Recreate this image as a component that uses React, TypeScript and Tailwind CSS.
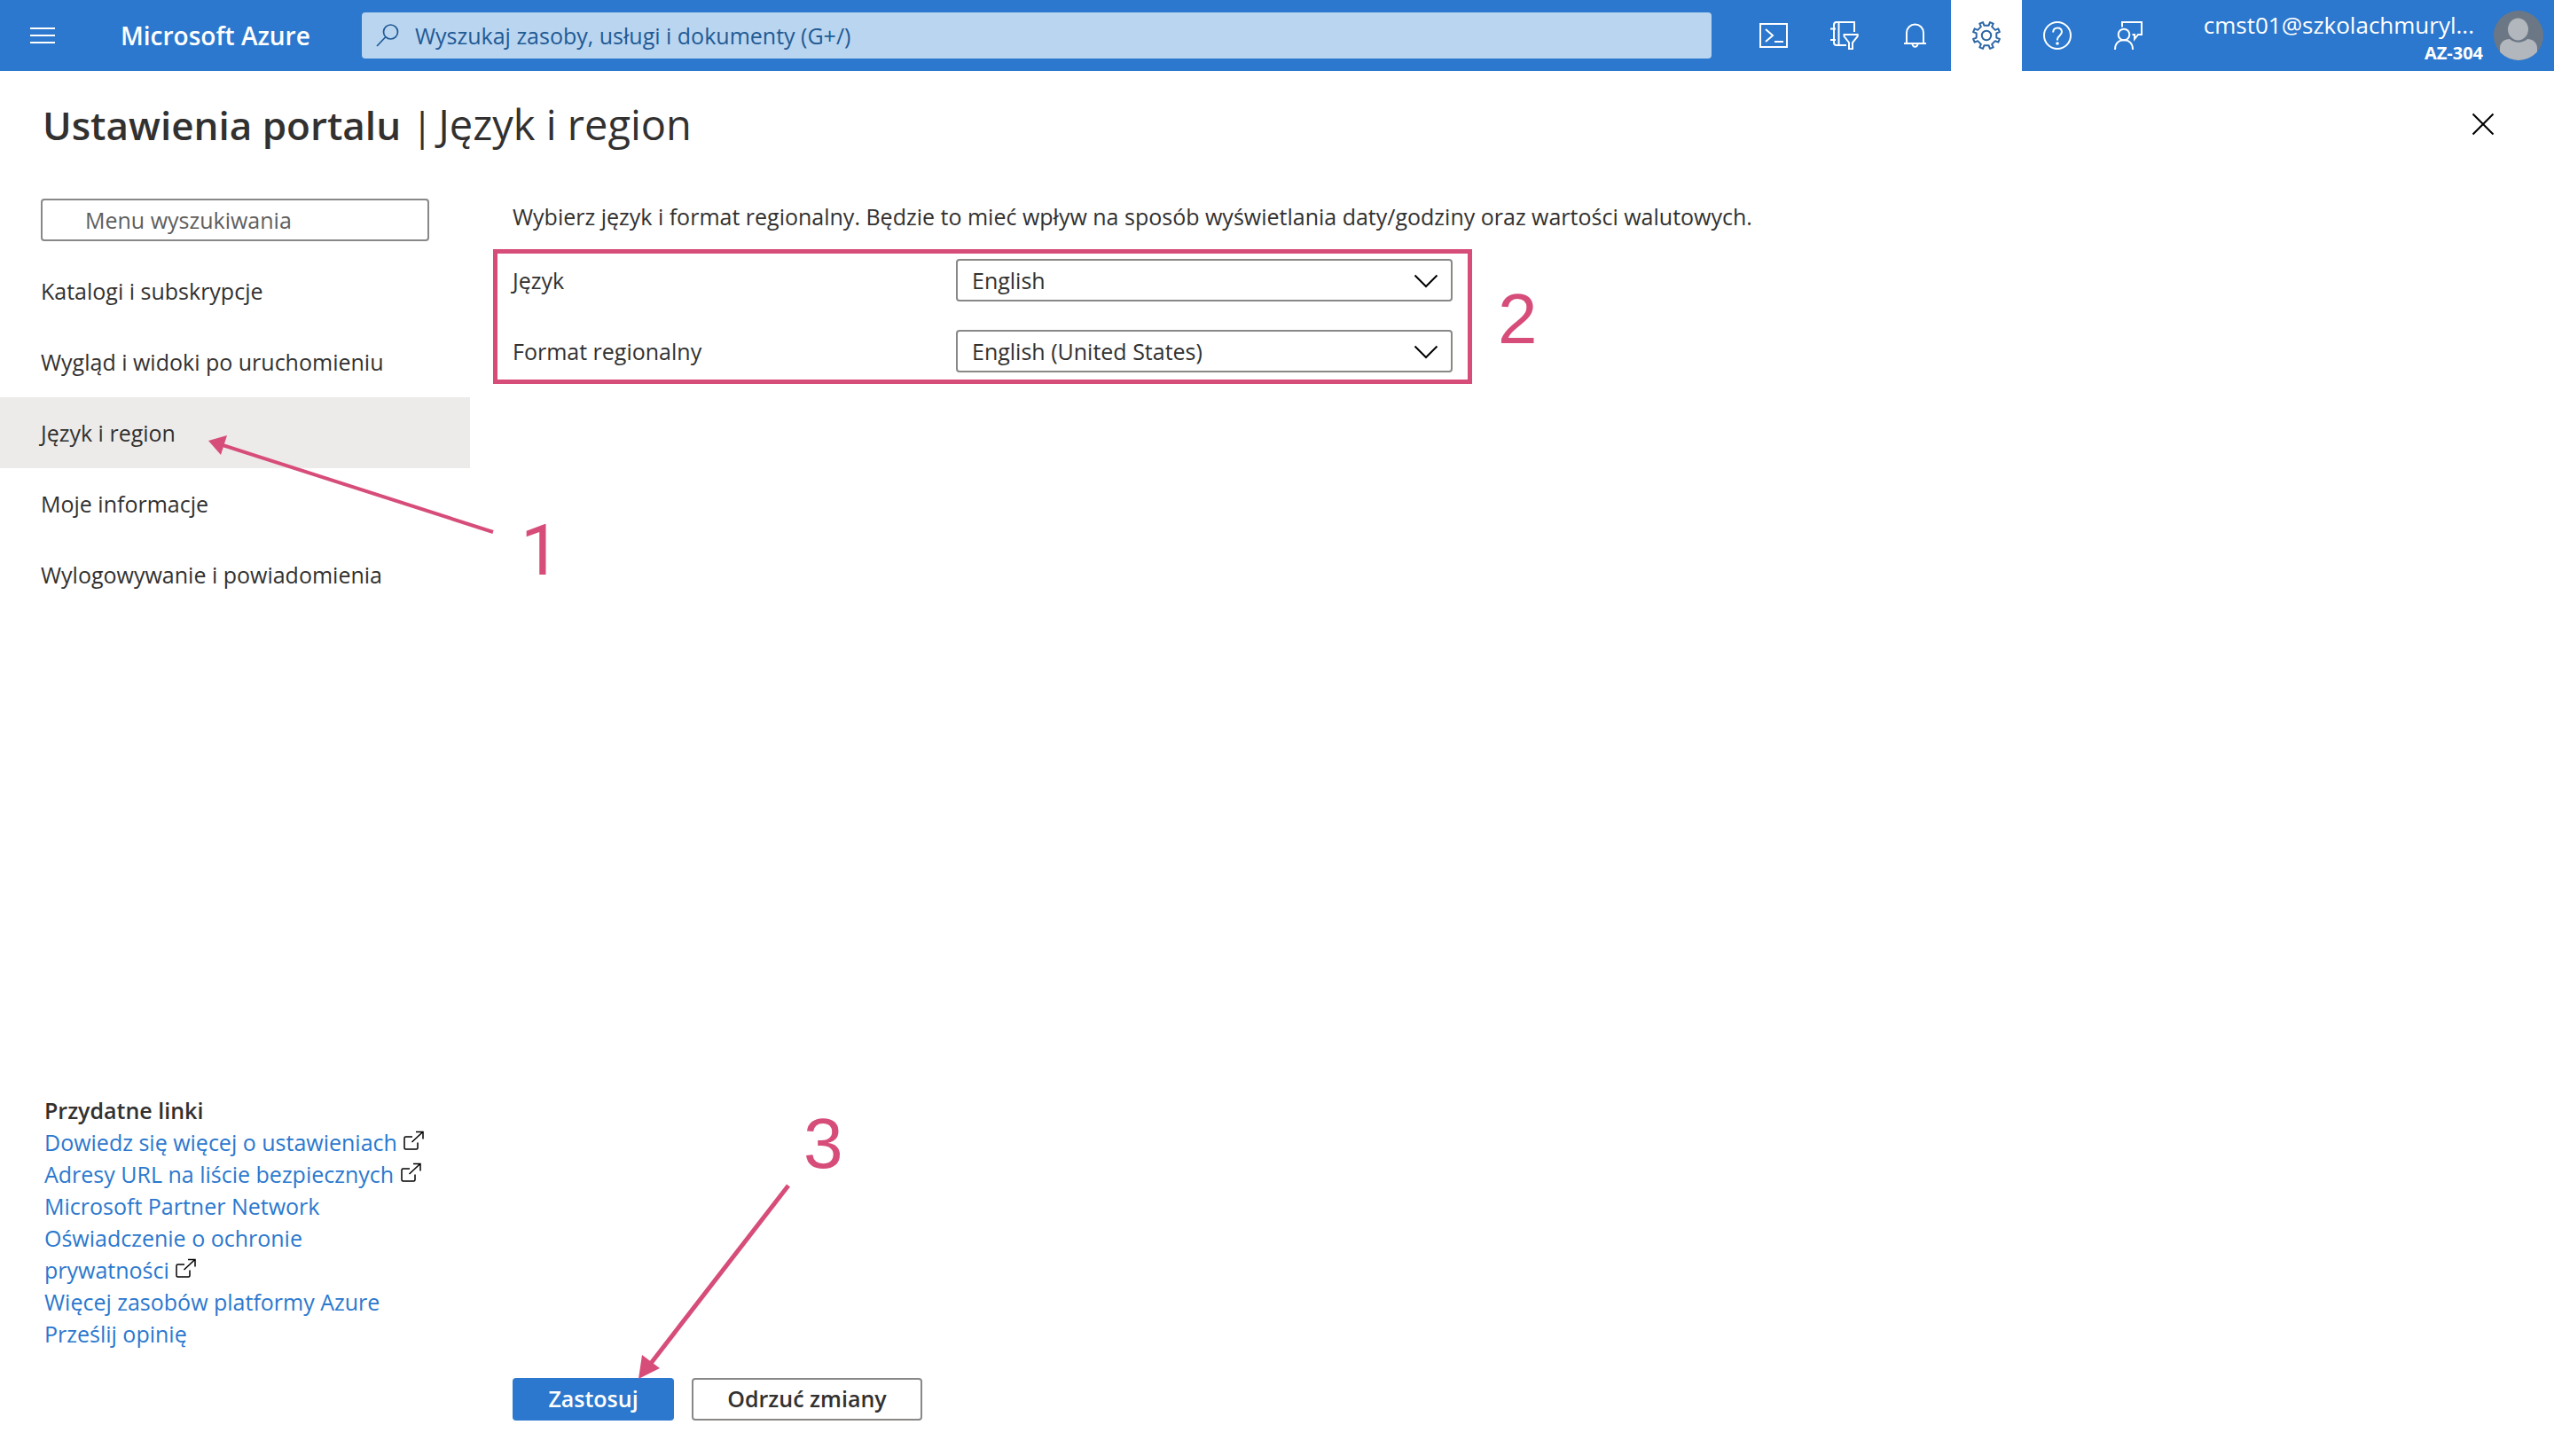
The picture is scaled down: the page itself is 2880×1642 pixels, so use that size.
import type { ReactNode } from 'react';

type Glyph = { children: ReactNode; className?: string; width?: number };

function Icon({ children, className = '', width = 2 }: Glyph) {
  return (
    <svg
      viewBox="0 0 32 32"
      className={'block size-8 ' + className}
      fill="none"
      stroke="currentColor"
      strokeWidth={width}
      aria-hidden="true"
    >
      {children}
    </svg>
  );
}

const polar = (radius: number, degrees: number) => {
  const a = ((degrees - 90) * Math.PI) / 180;
  return (16 + radius * Math.cos(a)).toFixed(2) + ' ' + (16 + radius * Math.sin(a)).toFixed(2);
};

// Outline of an eight-tooth gear, with a gap at twelve o'clock.
const gearPath =
  'M' +
  Array.from({ length: 8 }, (_, i) => {
    const gap = i * 45;
    return [polar(11.6, gap - 13), polar(11.6, gap + 13), polar(15.4, gap + 15), polar(15.4, gap + 30)].join('L');
  }).join('L') +
  'Z';

function CloudShellIcon() {
  return (
    <Icon>
      <path d="M1 3h30v26H1z" />
      <path d="M7 9l8 7-8 7M17 23h10" />
    </Icon>
  );
}

function DirectoryIcon() {
  return (
    <Icon>
      <path d="M27 12V1H7Q4 1 4 4v20q0 3 3 3h11M9.500 1v26M0 8.500h6M0 21h6" />
      <path d="M15.500 15h15.200v2l-5.700 7v7.200h-4V24l-5.500-7z" />
    </Icon>
  );
}

function BellIcon() {
  return (
    <Icon>
      <path d="M6 25V13a9.500 9.500 0 0 1 19 0v12M3 25h25M12.500 25.500a3 3.200 0 0 0 6 0" />
    </Icon>
  );
}

function GearIcon() {
  return (
    <Icon className="text-[#2b66a5]">
      <path d={gearPath} strokeLinejoin="round" />
      <circle cx="16" cy="16" r="5.200" />
    </Icon>
  );
}

function HelpIcon() {
  return (
    <Icon>
      <circle cx="16" cy="16" r="15" />
      <path d="M11.200 12.500c0-3 2-5 4.900-5s4.900 1.800 4.900 4.600c0 4-5 4.200-5 8.400v1" />
      <circle cx="16" cy="25" r="1.800" fill="currentColor" stroke="none" />
    </Icon>
  );
}

function FeedbackIcon() {
  return (
    <Icon>
      <path d="M9 6.500V1h22v14h-4l-4 5v-5h-2.500" />
      <circle cx="11" cy="15" r="6.300" />
      <path d="M1 32c0-7 4.200-10.700 10-10.700S21 25 21 32" />
    </Icon>
  );
}

function ExternalIcon() {
  return (
    <svg viewBox="0 0 24 24" className="inline-block size-6 align-[-1px] text-black" fill="none" stroke="currentColor" strokeWidth="1.500" aria-hidden="true">
      <path d="M11 7H3.500Q2 7 2 8.500v11Q2 21 3.500 21h12q1.500 0 1.500-1.500v-6M10.500 13 22.500 1.800M15 1.500h8v8" />
    </svg>
  );
}

const headerActions = [
  { label: 'Cloud Shell', icon: <CloudShellIcon />, active: false },
  { label: 'Katalogi i subskrypcje', icon: <DirectoryIcon />, active: false },
  { label: 'Powiadomienia', icon: <BellIcon />, active: false },
  { label: 'Ustawienia', icon: <GearIcon />, active: true },
  { label: 'Pomoc', icon: <HelpIcon />, active: false },
  { label: 'Opinia', icon: <FeedbackIcon />, active: false },
];

const menu = [
  'Katalogi i subskrypcje',
  'Wygląd i widoki po uruchomieniu',
  'Język i region',
  'Moje informacje',
  'Wylogowywanie i powiadomienia',
];

const links = [
  { text: 'Dowiedz się więcej o ustawieniach', external: true },
  { text: 'Adresy URL na liście bezpiecznych', external: true },
  { text: 'Microsoft Partner Network', external: false },
  { text: 'Oświadczenie o ochronie prywatności', external: true },
  { text: 'Więcej zasobów platformy Azure', external: false },
  { text: 'Prześlij opinię', external: false },
];

function Header() {
  return (
    <header className="flex h-20 items-center bg-[#2b78ce] text-white">
      <button type="button" aria-label="Menu" className="ml-8 flex size-8 items-center justify-center">
        <svg viewBox="0 0 28 20" className="h-5 w-7" stroke="currentColor" strokeWidth="2" aria-hidden="true">
          <path d="M0 2h28M0 10h28M0 18h28" />
        </svg>
      </button>
      <a href="#" className="ml-18 w-[272px] shrink-0 text-[28px] font-semibold">
        Microsoft Azure
      </a>
      <label className="flex h-[52px] flex-1 items-center rounded bg-[#bad5f0] pl-4 text-[#215a94]">
        <svg viewBox="0 0 26 26" className="size-[26px]" fill="none" stroke="currentColor" strokeWidth="1.700" aria-hidden="true">
          <circle cx="16.500" cy="9" r="8" />
          <path d="M11 14.500 1 25" />
        </svg>
        <input
          type="text"
          aria-label="Wyszukaj"
          placeholder="Wyszukaj zasoby, usługi i dokumenty (G+/)"
          className="ml-[18px] flex-1 bg-transparent outline-none placeholder:text-[#215a94]"
        />
      </label>
      <nav className="ml-[30px] flex">
        {headerActions.map((a) => (
          <button
            key={a.label}
            type="button"
            aria-label={a.label}
            className={'flex size-20 items-center justify-center ' + (a.active ? 'bg-white' : '')}
          >
            {a.icon}
          </button>
        ))}
      </nav>
      <button type="button" className="flex w-[440px] items-center justify-end pr-3">
        <span className="flex flex-col items-end pt-1">
          <span className="mr-2.5 text-[26px] leading-9">cmst01@szkolachmuryl...</span>
          <span className="text-[20px] leading-7 font-bold">AZ-304</span>
        </span>
        <svg viewBox="0 0 56 56" className="ml-3 size-14" aria-hidden="true">
          <clipPath id="avatar">
            <circle cx="28" cy="28" r="28" />
          </clipPath>
          <g clipPath="url(#avatar)">
            <path fill="#6b7785" d="M0 0h56v56H0z" />
            <path fill="#b2b6bd" d="M7 60V42c0-6 5-10 11-10 6 5 14 5 20 0 6 0 11 4 11 10v18z" />
            <ellipse cx="27.500" cy="21" rx="11.500" ry="12.500" fill="#b2b6bd" />
          </g>
        </svg>
      </button>
    </header>
  );
}

function Sidebar() {
  return (
    <aside className="flex w-[530px] shrink-0 flex-col pb-[120px]">
      <input
        type="text"
        aria-label="Menu wyszukiwania"
        placeholder="Menu wyszukiwania"
        className="mr-[46px] ml-[46px] h-12 rounded border-2 border-[#8a8886] pl-12 outline-none placeholder:text-[#605e5c]"
      />
      <nav className="mt-4">
        {menu.map((item, i) => (
          <a
            key={item}
            href="#"
            className={'relative flex h-20 items-center pl-[46px] ' + (i === 2 ? 'bg-[#edebe9]' : '')}
          >
            {item}
            {i === 2 && <StepOne />}
          </a>
        ))}
      </nav>
      <section className="mt-auto ml-[50px] w-[434px] leading-9">
        <h2 className="font-semibold">Przydatne linki</h2>
        <ul>
          {links.map((l) => (
            <li key={l.text}>
              <a href="#" className="text-[#2b78ce]">
                {l.text}
                {l.external && <>{' '}<ExternalIcon /></>}
              </a>
            </li>
          ))}
        </ul>
      </section>
    </aside>
  );
}

function StepOne() {
  return (
    <span className="pointer-events-none absolute top-10 left-[234px] block">
      <svg width="324" height="116" viewBox="0 0 324 116" className="block max-w-none text-[#d74d7a]" aria-hidden="true">
        <path d="M14 13 322 112" stroke="currentColor" strokeWidth="4" />
        <path d="M1 9l21-6-7 22z" fill="currentColor" />
      </svg>
      <StepNumber className='top-[93px] left-[353px] font-["Roboto",sans-serif]'>1</StepNumber>
    </span>
  );
}

function StepNumber({ children, className }: { children: ReactNode; className: string }) {
  return (
    <span className={'pointer-events-none absolute text-[80px] leading-[80px] text-[#d74d7a] ' + className}>
      {children}
    </span>
  );
}

function Dropdown({ id, label, value }: { id: string; label: string; value: string }) {
  return (
    <div className="flex items-center">
      <label htmlFor={id} className="w-[500px]">
        {label}
      </label>
      <div className="relative w-[560px]">
        <select id={id} defaultValue={value} className="block h-12 w-full appearance-none rounded border-2 border-[#8a8886] bg-white px-4 outline-none">
          <option>{value}</option>
        </select>
        <svg viewBox="0 0 28 16" className="pointer-events-none absolute top-[17px] right-4 h-4 w-7 text-black" fill="none" stroke="currentColor" strokeWidth="2" aria-hidden="true">
          <path d="M1.500 1.500 14 14 26.500 1.500" />
        </svg>
      </div>
    </div>
  );
}

export default function App() {
  return (
    <div className='flex min-h-screen flex-col bg-white font-["Open_Sans",sans-serif] text-[25px] leading-9 text-[#323130]'>
      <Header />
      <div className="flex h-36 items-center justify-between pr-16 pb-6 pl-12">
        <h1 className="flex items-baseline text-[44px] font-semibold">
          Ustawienia portalu
          <span className="mr-1.5 ml-3 font-normal">|</span>
          <span className="text-[47px] font-normal">Język i region</span>
        </h1>
        <button type="button" aria-label="Zamknij" className="flex size-8 items-center justify-center">
          <svg viewBox="0 0 26 26" className="size-[26px] text-black" stroke="currentColor" strokeWidth="2" aria-hidden="true">
            <path d="M1.500 1.500l23 23M24.500 1.500l-23 23" />
          </svg>
        </button>
      </div>
      <div className="flex flex-1">
        <Sidebar />
        <main className="flex flex-1 flex-col items-start pb-10 pl-[26px]">
          <p className="mt-0.5 pl-[22px]">
            Wybierz język i format regionalny. Będzie to mieć wpływ na sposób wyświetlania daty/godziny oraz wartości walutowych.
          </p>
          <div className="relative mt-[19px] flex flex-col gap-8 border-5 border-[#d74d7a] px-[17px] pt-1.5 pb-2">
            <Dropdown id="language" label="Język" value="English" />
            <Dropdown id="format" label="Format regionalny" value="English (United States)" />
            <StepNumber className='top-[34px] left-[1128px] font-["Liberation_Sans",sans-serif]'>2</StepNumber>
          </div>
          <div className="relative mt-auto ml-[22px] flex gap-5">
            <button type="button" className="h-12 w-[182px] rounded bg-[#2b78ce] pb-0.5 font-semibold text-white">
              Zastosuj
            </button>
            <button type="button" className="h-12 w-[260px] rounded border-2 border-[#8a8886] pb-0.5 font-semibold">
              Odrzuć zmiany
            </button>
            <svg width="176" height="224" viewBox="0 0 176 224" className="pointer-events-none absolute bottom-[45px] left-[141px] text-[#d74d7a]" aria-hidden="true">
              <path d="M13 207 170 4" stroke="currentColor" strokeWidth="5" />
              <path d="M1 222l4-27 20 15z" fill="currentColor" />
            </svg>
            <StepNumber className='bottom-[272px] left-[328px] font-["Liberation_Sans",sans-serif]'>3</StepNumber>
          </div>
        </main>
      </div>
    </div>
  );
}
